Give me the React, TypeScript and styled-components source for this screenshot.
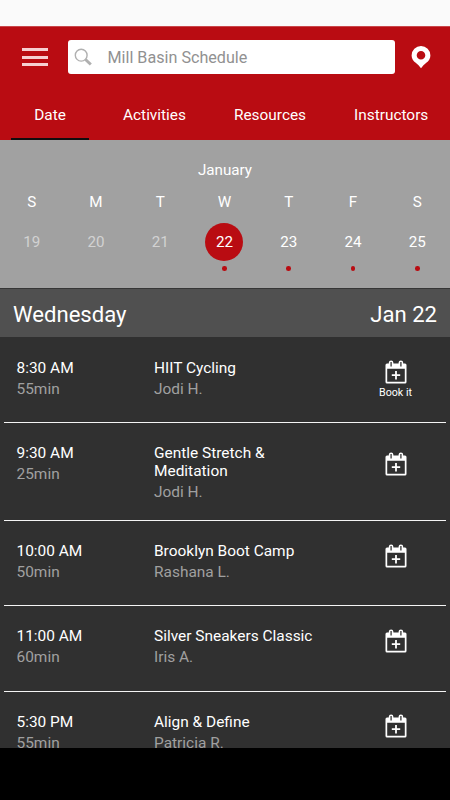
import React from "react";
import styled, { createGlobalStyle } from "styled-components";

const RED = "#b90c12";

const GlobalStyle = createGlobalStyle`
  * { box-sizing: border-box; }
  body { margin: 0; background: #000; font-family: Roboto, "Liberation Sans", sans-serif; }
`;

const Screen = styled.div`
  width: 450px;
  height: 800px;
  display: flex;
  flex-direction: column;
  overflow: hidden;
  background: #000;
  color: #fff;
  font-size: 15.2px;
  white-space: nowrap;
`;

const StatusBar = styled.div`
  height: 26px;
  flex: none;
  background: #fafafa;
`;

const Header = styled.header`
  height: 114px;
  flex: none;
  display: flex;
  flex-direction: column;
  background: ${RED};
  border-top: 1px solid #c9474b;
`;

const TopBar = styled.div`
  height: 60px;
  display: flex;
  align-items: center;
  padding: 0 18px 0 22px;
`;

const MenuButton = styled.button`
  width: 26px;
  height: 18px;
  padding: 0;
  border: 0;
  background: none;
  display: flex;
  flex-direction: column;
  justify-content: space-between;
`;

const MenuBar = styled.span`
  width: 26px;
  height: 3px;
  background: #f6cfd1;
`;

const SearchBox = styled.div`
  width: 327px;
  height: 34px;
  margin-left: 20px;
  padding: 1px 0 0 6px;
  display: flex;
  align-items: center;
  border-radius: 3px;
  background: #fff;
  color: #919191;
  font-size: 16.15px;
`;

const SearchText = styled.span`
  margin-left: 14.5px;
`;

const PinButton = styled.button`
  width: 20px;
  height: 24px;
  margin-left: 16.4px;
  padding: 0;
  border: 0;
  background: none;
  display: flex;
`;

const Tabs = styled.nav`
  flex: 1;
  display: flex;
  padding-left: 11px;
`;

const Tab = styled.a<{ $active?: boolean }>`
  flex: none;
  width: ${(p) => (p.$active ? "78px" : "auto")};
  margin-right: ${(p) => (p.$active ? "34px" : "48px")};
  padding-top: 18px;
  text-align: center;
  line-height: 20px;
  font-size: 15.4px;
  color: #fff;
  border-bottom: 2px solid ${(p) => (p.$active ? "#120d0e" : "transparent")};
`;

const Calendar = styled.section`
  height: 148px;
  flex: none;
  background: #a1a1a1;
  padding-top: 20px;
`;

const Month = styled.div`
  line-height: 20px;
  text-align: center;
`;

const Week = styled.div`
  display: grid;
  grid-template-columns: repeat(7, 64.25px);
  margin: 12px 0 0 -0.4px;
`;

const Day = styled.div`
  display: flex;
  flex-direction: column;
  align-items: center;
  line-height: 20px;
`;

const DayNumber = styled.div<{ $selected: boolean; $past: boolean }>`
  width: 38px;
  height: 38px;
  margin-top: 11px;
  border-radius: 50%;
  line-height: 39px;
  text-align: center;
  background: ${(p) => (p.$selected ? RED : "transparent")};
  color: ${(p) => (p.$past ? "#d2d2d2" : "#fff")};
`;

const Dot = styled.span`
  width: 4.6px;
  height: 4.6px;
  margin-top: 5.4px;
  border-radius: 50%;
  background: ${RED};
`;

const DayHeading = styled.h2`
  height: 49px;
  flex: none;
  margin: 0;
  padding: 1px 13px 0;
  display: flex;
  align-items: center;
  justify-content: space-between;
  border-top: 1px solid #363636;
  background: #505050;
  font-size: 22.1px;
  font-weight: 400;
`;

const ClassList = styled.div`
  height: 411px;
  flex: none;
  overflow: hidden;
  padding-top: 1px;
  background: #303030;
`;

const ClassRow = styled.article<{ $height: number }>`
  height: ${(p) => p.$height}px;
  margin: 0 4px;
  padding: 21px 0 0 12.5px;
  display: grid;
  grid-template-columns: 137.5px 1fr 101px;
  align-items: start;
  border-bottom: 1px solid #f4f4f4;
  font-size: 15.45px;
  line-height: 18px;
`;

const Detail = styled.div`
  margin-top: 3px;
  color: #a0a0a0;
`;

const BookButton = styled.button<{ $offset: number }>`
  margin: ${(p) => p.$offset}px 0 0;
  padding: 0;
  border: 0;
  background: none;
  display: flex;
  flex-direction: column;
  align-items: center;
  color: #fff;
  font: 10.7px/13px Roboto, sans-serif;
`;

const BookLabel = styled.span`
  margin-top: 2px;
`;

const SearchIcon = () => (
  <svg width="19" height="19" viewBox="0 0 19 19" fill="none" stroke="#b0b0b0">
    <circle cx="7.2" cy="7.2" r="5.9" strokeWidth="1.4" />
    <path d="M11.5 11.5l5.3 5" strokeWidth="3" />
  </svg>
);

const PinIcon = () => (
  <svg width="20" height="24" viewBox="0 0 20 24">
    <path
      fill="#fff"
      fillRule="evenodd"
      d="M10 1a9.4 9.4 0 0 1 9.4 9.4c0 3.2-1.8 5.6-4.1 7.4-2 1.5-3.8 3.3-5.3 5.5-1.5-2.2-3.3-4-5.3-5.5C2.4 16 .6 13.6.6 10.4A9.4 9.4 0 0 1 10 1zm0 4.9a4.3 4.3 0 1 0 0 8.6 4.3 4.3 0 0 0 0-8.6z"
    />
  </svg>
);

const CalendarPlusIcon = () => (
  <svg width="22" height="24" viewBox="0 0 22 24">
    <path
      fill="#fff"
      fillRule="evenodd"
      d="M2 3.6h18a1.5 1.5 0 0 1 1.5 1.5v16.9A1.5 1.5 0 0 1 20 23.5H2A1.5 1.5 0 0 1 .5 22v-16.9A1.5 1.5 0 0 1 2 3.6zm.2 5.2v13h17.6v-13z"
    />
    <rect x="3.8" y="0.5" width="4.6" height="7.5" rx="2.3" fill="#fff" />
    <rect x="13.6" y="0.5" width="4.6" height="7.5" rx="2.3" fill="#fff" />
    <path d="M6.1 2v4.6M15.9 2v4.6" stroke="#444" strokeWidth="1.4" />
    <path d="M11 11v8.4M6.8 15.2h8.4" stroke="#fff" strokeWidth="1.8" />
  </svg>
);

const days = [
  { letter: "S", date: 19 },
  { letter: "M", date: 20 },
  { letter: "T", date: 21 },
  { letter: "W", date: 22 },
  { letter: "T", date: 23 },
  { letter: "F", date: 24 },
  { letter: "S", date: 25 },
];
const today = 22;

interface GymClass {
  time: string;
  length: string;
  title: string[];
  instructor: string;
  height: number;
  iconOffset: number;
  label?: string;
}

const classes: GymClass[] = [
  { time: "8:30 AM", length: "55min", title: ["HIIT Cycling"], instructor: "Jodi H.", height: 85, iconOffset: 1.4, label: "Book it" },
  { time: "9:30 AM", length: "25min", title: ["Gentle Stretch &", "Meditation"], instructor: "Jodi H.", height: 98, iconOffset: 8 },
  { time: "10:00 AM", length: "50min", title: ["Brooklyn Boot Camp"], instructor: "Rashana L.", height: 85, iconOffset: 1.5 },
  { time: "11:00 AM", length: "60min", title: ["Silver Sneakers Classic"], instructor: "Iris A.", height: 85.5, iconOffset: 2 },
  { time: "5:30 PM", length: "55min", title: ["Align & Define"], instructor: "Patricia R.", height: 85, iconOffset: 1.5 },
];

export default function App() {
  return (
    <Screen>
      <GlobalStyle />
      <StatusBar />
      <Header>
        <TopBar>
          <MenuButton aria-label="Menu">
            <MenuBar />
            <MenuBar />
            <MenuBar />
          </MenuButton>
          <SearchBox>
            <SearchIcon />
            <SearchText>Mill Basin Schedule</SearchText>
          </SearchBox>
          <PinButton aria-label="Location">
            <PinIcon />
          </PinButton>
        </TopBar>
        <Tabs>
          <Tab $active>Date</Tab>
          <Tab>Activities</Tab>
          <Tab>Resources</Tab>
          <Tab>Instructors</Tab>
        </Tabs>
      </Header>
      <Calendar>
        <Month>January</Month>
        <Week>
          {days.map((d) => (
            <Day key={d.date}>
              {d.letter}
              <DayNumber $selected={d.date === today} $past={d.date < today}>
                {d.date}
              </DayNumber>
              {d.date >= today && <Dot />}
            </Day>
          ))}
        </Week>
      </Calendar>
      <DayHeading>
        <span>Wednesday</span>
        <span>Jan 22</span>
      </DayHeading>
      <ClassList>
        {classes.map((c) => (
          <ClassRow key={c.time} $height={c.height}>
            <div>
              {c.time}
              <Detail>{c.length}</Detail>
            </div>
            <div>
              {c.title.map((line) => (
                <div key={line}>{line}</div>
              ))}
              <Detail>{c.instructor}</Detail>
            </div>
            <BookButton $offset={c.iconOffset} aria-label="Book">
              <CalendarPlusIcon />
              {c.label && <BookLabel>{c.label}</BookLabel>}
            </BookButton>
          </ClassRow>
        ))}
      </ClassList>
    </Screen>
  );
}
